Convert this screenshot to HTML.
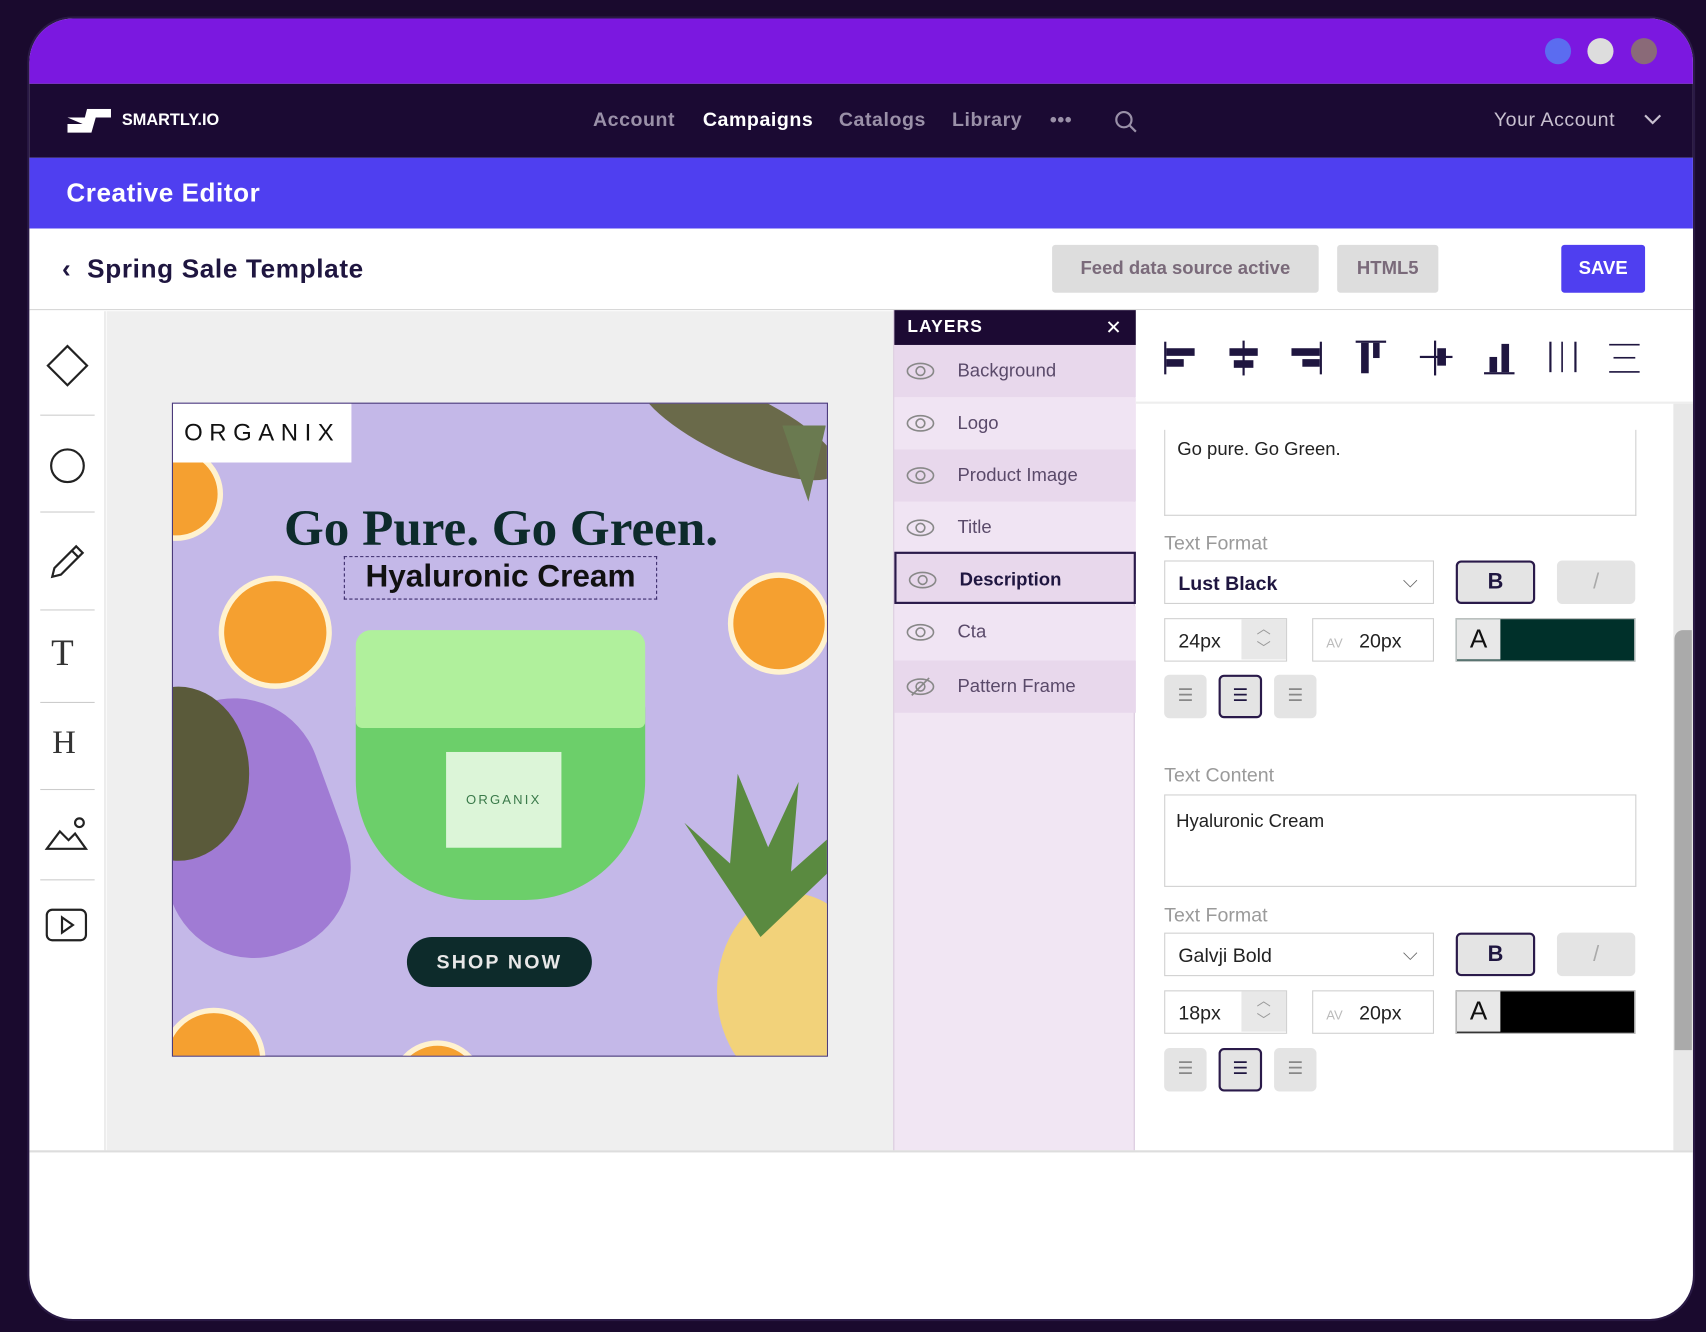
<!DOCTYPE html>
<html><head><meta charset="utf-8"><style>
*{margin:0;padding:0;box-sizing:border-box}
html,body{width:1706px;height:1332px;overflow:hidden;background:#1a0a2e;font-family:"Liberation Sans",sans-serif}
#s{position:absolute;left:0;top:0;width:1568px;height:1224px;transform:scale(1.08801,1.08824);transform-origin:0 0}
.a{position:absolute}
.frame{left:27px;top:17px;width:1529px;height:1195px;border-radius:40px;overflow:hidden;background:#fff;box-shadow:0 0 0 2px #2a1a45}
.nav a{position:absolute;top:100px;font-size:18px;font-weight:bold;color:#9a90a8;letter-spacing:.5px}
.lay{position:absolute;left:0;width:222px;height:48px;font-size:17px;color:#5a4a6a}
.lay span{position:absolute;left:58px;top:14px}
.lay svg{position:absolute;left:10px;top:14px}
.lbl{position:absolute;font-size:18px;color:#9a9a9a}
.box{position:absolute;border:1.5px solid #d0d0d0;background:#fff}
.gb{position:absolute;background:#e4e4e4;border-radius:5px}
.tb{position:absolute;left:10px;width:50px;height:1px;background:#ccc}
</style></head><body><div id="s">
<div class="a frame">
 <div class="a" style="left:0;top:0;width:1529px;height:60px;background:#7b18e0"></div>
 <div class="a" style="left:1393px;top:18px;width:24px;height:24px;border-radius:50%;background:#5b6cf0"></div>
 <div class="a" style="left:1432px;top:18px;width:24px;height:24px;border-radius:50%;background:#ddd"></div>
 <div class="a" style="left:1472px;top:18px;width:24px;height:24px;border-radius:50%;background:#8a6a78"></div>
 <div class="a" style="left:0;top:60px;width:1529px;height:68px;background:#1b0a33"></div>
 <div class="a" style="left:0;top:128px;width:1529px;height:65px;background:#4f3ff0"></div>
 <div class="a" style="left:34px;top:147px;color:#fff;font-size:24px;font-weight:bold;letter-spacing:.5px">Creative Editor</div>
 <div class="a" style="left:0;top:193px;width:1529px;height:75px;background:#fff;border-bottom:1.5px solid #d6d6d6"></div>
 <div class="a" style="left:30px;top:217px;color:#1f1640;font-size:24px;font-weight:bold;letter-spacing:.6px">‹&nbsp; Spring Sale Template</div>
 <div class="a" style="left:940px;top:208px;width:245px;height:44px;background:#ddd;border-radius:3px;color:#7a6a7a;font-size:17px;font-weight:bold;text-align:center;line-height:44px">Feed data source active</div>
 <div class="a" style="left:1202px;top:208px;width:93px;height:44px;background:#ddd;border-radius:3px;color:#7a6a7a;font-size:17px;font-weight:bold;text-align:center;line-height:44px">HTML5</div>
 <div class="a" style="left:1408px;top:208px;width:77px;height:44px;background:#4f3ff0;border-radius:3px;color:#fff;font-size:17px;font-weight:bold;text-align:center;line-height:44px">SAVE</div>
 <!-- left toolbar -->
 <div class="a" style="left:0;top:269px;width:70px;height:771px;background:#fff;border-right:1.5px solid #ddd">
  <svg class="a" style="left:15px;top:30px" width="40" height="40"><path d="M20 2 L38 20 L20 38 L2 20Z" fill="none" stroke="#222" stroke-width="2"/></svg>
  <div class="tb" style="top:95px"></div>
  <svg class="a" style="left:17px;top:124px" width="36" height="36"><circle cx="18" cy="18" r="15" fill="none" stroke="#222" stroke-width="2"/></svg>
  <div class="tb" style="top:184px"></div>
  <svg class="a" style="left:17px;top:212px" width="36" height="36"><path d="M4 32 L6 24 L26 4 L32 10 L12 30Z M22 8 L28 14" fill="none" stroke="#222" stroke-width="2"/></svg>
  <div class="tb" style="top:274px"></div>
  <div class="a" style="left:20px;top:296px;font-size:34px;color:#333;font-family:'Liberation Serif',serif">T</div>
  <div class="tb" style="top:359px"></div>
  <div class="a" style="left:21px;top:380px;font-size:30px;color:#333;font-family:'Liberation Serif',serif">H</div>
  <div class="tb" style="top:439px"></div>
  <svg class="a" style="left:14px;top:464px" width="40" height="32"><path d="M2 30 L14 14 L22 22 L28 16 L38 30Z" fill="none" stroke="#222" stroke-width="2"/><circle cx="32" cy="6" r="4" fill="none" stroke="#222" stroke-width="2"/></svg>
  <div class="tb" style="top:522px"></div>
  <svg class="a" style="left:14px;top:548px" width="40" height="32"><rect x="2" y="2" width="36" height="28" rx="5" fill="none" stroke="#222" stroke-width="2"/><path d="M16 9 L26 16 L16 23Z" fill="none" stroke="#222" stroke-width="2"/></svg>
 </div>
 <!-- canvas -->
 <div class="a" style="left:71px;top:269px;width:723px;height:771px;background:#efefef"></div>
 <div class="a" style="left:131px;top:353px;width:603px;height:601px;background:#c4b8e8;border:1.5px solid #4a3a7a;overflow:hidden">
  <div class="a" style="left:-20px;top:270px;width:170px;height:240px;background:#9a70d0;border-radius:80px;transform:rotate(-20deg);opacity:.85"></div>
  <div class="a" style="left:-60px;top:260px;width:130px;height:160px;background:#5a5a3a;border-radius:50%"></div>
  <div class="a" style="left:420px;top:-10px;width:200px;height:60px;background:#6a6a4a;border-radius:50%;transform:rotate(25deg)"></div>
  <div class="a" style="left:560px;top:20px;width:40px;height:70px;background:#6a7a50;clip-path:polygon(0 0,100% 0,60% 100%)"></div>
  <div class="a" style="left:500px;top:450px;width:140px;height:180px;background:#f2d27a;border-radius:50%"></div>
  <div class="a" style="left:470px;top:340px;width:140px;height:150px;background:#5a8a40;clip-path:polygon(50% 100%,0 30%,30% 55%,35% 0,55% 45%,75% 5%,70% 60%,100% 35%,95% 60%)"></div>
  <div class="a" style="left:-40px;top:40px;width:86px;height:86px;border-radius:50%;background:#f5a030;border:5px solid #fff2d0"></div>
  <div class="a" style="left:42px;top:158px;width:104px;height:104px;border-radius:50%;background:#f5a030;border:5px solid #fff2d0"></div>
  <div class="a" style="left:510px;top:155px;width:94px;height:94px;border-radius:50%;background:#f5a030;border:5px solid #fff2d0"></div>
  <div class="a" style="left:-10px;top:555px;width:95px;height:95px;border-radius:50%;background:#f5a030;border:5px solid #fff2d0"></div>
  <div class="a" style="left:200px;top:585px;width:86px;height:86px;border-radius:50%;background:#f5a030;border:5px solid #fff2d0"></div>
  <div class="a" style="left:0;top:0;width:164px;height:54px;background:#fff;font-size:22px;letter-spacing:6px;text-align:center;line-height:54px;color:#111">ORGANIX</div>
  <div class="a" style="left:-20px;top:88px;width:643px;text-align:center;font-family:'Liberation Serif',serif;font-weight:bold;font-size:47px;color:#0d2b2b">Go Pure. Go Green.</div>
  <div class="a" style="left:157px;top:140px;width:288px;height:40px;border:1.5px dashed #3a2a6a;text-align:center;font-weight:bold;font-size:29px;line-height:36px;color:#111">Hyaluronic Cream</div>
  <div class="a" style="left:168px;top:270px;width:266px;height:186px;background:#6ccf6a;border-radius:10px 10px 110px 110px"></div>
  <div class="a" style="left:168px;top:208px;width:266px;height:90px;background:#b0f09c;border-radius:14px 14px 6px 6px"></div>
  <div class="a" style="left:251px;top:320px;width:106px;height:88px;background:#dcf5d8;font-size:12px;letter-spacing:2px;color:#3a7a4a;text-align:center;line-height:88px">ORGANIX</div>
  <div class="a" style="left:215px;top:490px;width:170px;height:46px;background:#0d2b2b;border-radius:23px;color:#e8e8e8;font-size:18px;font-weight:bold;letter-spacing:2px;text-align:center;line-height:46px">SHOP NOW</div>
 </div>
 <!-- layers -->
 <div class="a" style="left:794px;top:268px;width:222px;height:772px;background:#f1e6f3;border-left:1.5px solid #d8c8dc;border-right:1.5px solid #d8c8dc">
  <div class="a" style="left:0;top:0;width:222px;height:32px;background:#1c0a33;color:#fff;font-weight:bold;font-size:16px;letter-spacing:1px;line-height:32px;padding-left:12px">LAYERS<span style="position:absolute;right:12px;font-weight:normal;font-size:18px">✕</span></div>
  <div class="lay" style="top:32px;background:#e8d8ec"><svg width="28" height="20"><ellipse cx="14" cy="10" rx="12" ry="7" fill="none" stroke="#888" stroke-width="1.5"/><circle cx="14" cy="10" r="4" fill="none" stroke="#888" stroke-width="1.5"/></svg><span>Background</span></div>
  <div class="lay" style="top:80px;background:#f0e4f3"><svg width="28" height="20"><ellipse cx="14" cy="10" rx="12" ry="7" fill="none" stroke="#888" stroke-width="1.5"/><circle cx="14" cy="10" r="4" fill="none" stroke="#888" stroke-width="1.5"/></svg><span>Logo</span></div>
  <div class="lay" style="top:128px;background:#e8d8ec"><svg width="28" height="20"><ellipse cx="14" cy="10" rx="12" ry="7" fill="none" stroke="#888" stroke-width="1.5"/><circle cx="14" cy="10" r="4" fill="none" stroke="#888" stroke-width="1.5"/></svg><span>Product Image</span></div>
  <div class="lay" style="top:176px;background:#f0e4f3"><svg width="28" height="20"><ellipse cx="14" cy="10" rx="12" ry="7" fill="none" stroke="#888" stroke-width="1.5"/><circle cx="14" cy="10" r="4" fill="none" stroke="#888" stroke-width="1.5"/></svg><span>Title</span></div>
  <div class="lay" style="top:222px;height:48px;background:#e8d8ec;border:2px solid #2a1a4a;color:#1f1640;font-weight:bold"><svg width="28" height="20"><ellipse cx="14" cy="10" rx="12" ry="7" fill="none" stroke="#888" stroke-width="1.5"/><circle cx="14" cy="10" r="4" fill="none" stroke="#888" stroke-width="1.5"/></svg><span>Description</span></div>
  <div class="lay" style="top:272px;height:50px;background:#f0e4f3"><svg width="28" height="20"><ellipse cx="14" cy="10" rx="12" ry="7" fill="none" stroke="#888" stroke-width="1.5"/><circle cx="14" cy="10" r="4" fill="none" stroke="#888" stroke-width="1.5"/></svg><span>Cta</span></div>
  <div class="lay" style="top:322px;background:#e8d8ec"><svg width="28" height="20"><ellipse cx="14" cy="10" rx="12" ry="7" fill="none" stroke="#888" stroke-width="1.5"/><circle cx="14" cy="10" r="4" fill="none" stroke="#888" stroke-width="1.5"/><path d="M6 18 L22 2" stroke="#888" stroke-width="1.5"/></svg><span>Pattern Frame</span></div>
 </div>
 <!-- right panel -->
 <div class="a" style="left:1017px;top:268px;width:512px;height:86px;background:#fff;border-bottom:2px solid #eee"></div>
 <svg class="a" style="left:1040px;top:293px" width="450" height="40" fill="#1f1640">
  <rect x="3" y="4" width="2" height="30"/><rect x="5" y="10" width="26" height="7"/><rect x="5" y="20" width="16" height="7"/>
  <rect x="75" y="3" width="2" height="32"/><rect x="63" y="10" width="26" height="7"/><rect x="67" y="21" width="18" height="7"/>
  <rect x="146" y="4" width="2" height="30"/><rect x="120" y="10" width="26" height="7"/><rect x="130" y="20" width="16" height="7"/>
  <rect x="179" y="3" width="28" height="2"/><rect x="184" y="5" width="7" height="28"/><rect x="195" y="5" width="6" height="14"/>
  <rect x="251" y="3" width="2" height="32"/><rect x="254" y="10" width="8" height="16"/><rect x="238" y="17" width="30" height="2"/>
  <rect x="297" y="32" width="28" height="2"/><rect x="302" y="18" width="7" height="14"/><rect x="313" y="6" width="7" height="26"/>
  <rect x="357" y="4" width="2" height="28"/><rect x="368" y="4" width="1.5" height="28"/><rect x="380" y="4" width="2" height="28"/>
  <rect x="412" y="6" width="28" height="1.5"/><rect x="416" y="18" width="20" height="1.5"/><rect x="412" y="31" width="28" height="1.5"/>
 </svg>
 <div class="a" style="left:1511px;top:354px;width:18px;height:686px;background:#e8e8e8"></div>
 <div class="a" style="left:1512px;top:562px;width:16px;height:386px;background:#aaa;border-radius:8px 0 0 0"></div>
 <div class="box" style="left:1043px;top:378px;width:434px;height:79px;border-top:none"></div>
 <div class="a" style="left:1055px;top:386px;font-size:17px;color:#222">Go pure. Go Green.</div>
 <div class="lbl" style="left:1043px;top:472px">Text Format</div>
 <div class="box" style="left:1043px;top:498px;width:248px;height:40px;padding:10px 12px;font-size:18px;font-weight:bold;color:#1f1640">Lust Black<span style="position:absolute;right:14px;top:8px;color:#666;font-weight:normal">⌵</span></div>
 <div class="gb" style="left:1311px;top:498px;width:73px;height:40px;border:2px solid #2a1a4a;text-align:center;line-height:36px;font-weight:bold;font-size:20px;color:#1f1640">B</div>
 <div class="gb" style="left:1404px;top:498px;width:72px;height:40px;text-align:center;line-height:40px;font-size:20px;color:#aaa">/</div>
 <div class="box" style="left:1043px;top:551px;width:113px;height:40px;padding:10px 12px;font-size:18px;color:#222">24px<span style="position:absolute;left:70px;top:0;width:41px;height:37px;background:#e8e8e8;color:#999;font-size:13px;text-align:center;line-height:18px">︿<br>﹀</span></div>
 <div class="box" style="left:1179px;top:551px;width:112px;height:40px;padding:10px 12px;font-size:18px;color:#222"><span style="color:#bbb;font-size:12px">AV</span>&nbsp;&nbsp; 20px</div>
 <div class="a" style="left:1311px;top:551px;width:165px;height:40px;background:#00302a;border:1.5px solid #ccc"><span style="position:absolute;left:0;top:0;width:40px;height:37px;background:#e8e8e8;font-size:24px;text-align:center;line-height:37px;color:#111">A</span></div>
 <div class="gb" style="left:1043px;top:603px;width:39px;height:40px;color:#888;text-align:center;line-height:40px">☰</div>
 <div class="gb" style="left:1093px;top:603px;width:40px;height:40px;border:2px solid #2a1a4a;text-align:center;line-height:36px;color:#1f1640">☰</div>
 <div class="gb" style="left:1144px;top:603px;width:39px;height:40px;color:#888;text-align:center;line-height:40px">☰</div>
 <div class="lbl" style="left:1043px;top:685px">Text Content</div>
 <div class="box" style="left:1043px;top:713px;width:434px;height:85px;padding:14px 10px;font-size:17px;color:#222">Hyaluronic Cream</div>
 <div class="lbl" style="left:1043px;top:814px">Text Format</div>
 <div class="box" style="left:1043px;top:840px;width:248px;height:40px;padding:10px 12px;font-size:18px;color:#222">Galvji Bold<span style="position:absolute;right:14px;top:8px;color:#666">⌵</span></div>
 <div class="gb" style="left:1311px;top:840px;width:73px;height:40px;border:2px solid #2a1a4a;text-align:center;line-height:36px;font-weight:bold;font-size:20px;color:#1f1640">B</div>
 <div class="gb" style="left:1404px;top:840px;width:72px;height:40px;text-align:center;line-height:40px;font-size:20px;color:#aaa">/</div>
 <div class="box" style="left:1043px;top:893px;width:113px;height:40px;padding:10px 12px;font-size:18px;color:#222">18px<span style="position:absolute;left:70px;top:0;width:41px;height:37px;background:#e8e8e8;color:#999;font-size:13px;text-align:center;line-height:18px">︿<br>﹀</span></div>
 <div class="box" style="left:1179px;top:893px;width:112px;height:40px;padding:10px 12px;font-size:18px;color:#222"><span style="color:#bbb;font-size:12px">AV</span>&nbsp;&nbsp; 20px</div>
 <div class="a" style="left:1311px;top:893px;width:165px;height:40px;background:#000;border:1.5px solid #ccc"><span style="position:absolute;left:0;top:0;width:40px;height:37px;background:#e8e8e8;font-size:24px;text-align:center;line-height:37px;color:#111">A</span></div>
 <div class="gb" style="left:1043px;top:946px;width:39px;height:40px;color:#888;text-align:center;line-height:40px">☰</div>
 <div class="gb" style="left:1093px;top:946px;width:40px;height:40px;border:2px solid #2a1a4a;text-align:center;line-height:36px;color:#1f1640">☰</div>
 <div class="gb" style="left:1144px;top:946px;width:39px;height:40px;color:#888;text-align:center;line-height:40px">☰</div>
 <div class="a" style="left:0;top:1040px;width:1529px;height:1.5px;background:#ddd"></div>
</div>
<!-- nav content -->
<svg class="a" style="left:62px;top:100px" width="42" height="22"><path d="M0 8 H16 L18 0 H40 V8 H26 L22 22 H0 V14 H14 Z" fill="#fff"/></svg>
<div class="a" style="left:112px;top:102px;color:#fff;font-size:15px;font-weight:bold">SMARTLY.IO</div>
<div class="nav">
 <a style="left:545px">Account</a><a style="left:646px;color:#fff">Campaigns</a><a style="left:771px">Catalogs</a><a style="left:875px">Library</a><a style="left:965px">•••</a>
</div>
<svg class="a" style="left:1024px;top:101px" width="22" height="22"><circle cx="9" cy="9" r="7" fill="none" stroke="#9a90a8" stroke-width="2"/><path d="M14 14 L20 20" stroke="#9a90a8" stroke-width="2"/></svg>
<div class="a" style="left:1373px;top:100px;color:#c8c0d0;font-size:18px;letter-spacing:.5px">Your Account</div>
<svg class="a" style="left:1510px;top:104px" width="18" height="12"><path d="M2 2 L9 9 L16 2" fill="none" stroke="#c8c0d0" stroke-width="2"/></svg>
</div></body></html>
